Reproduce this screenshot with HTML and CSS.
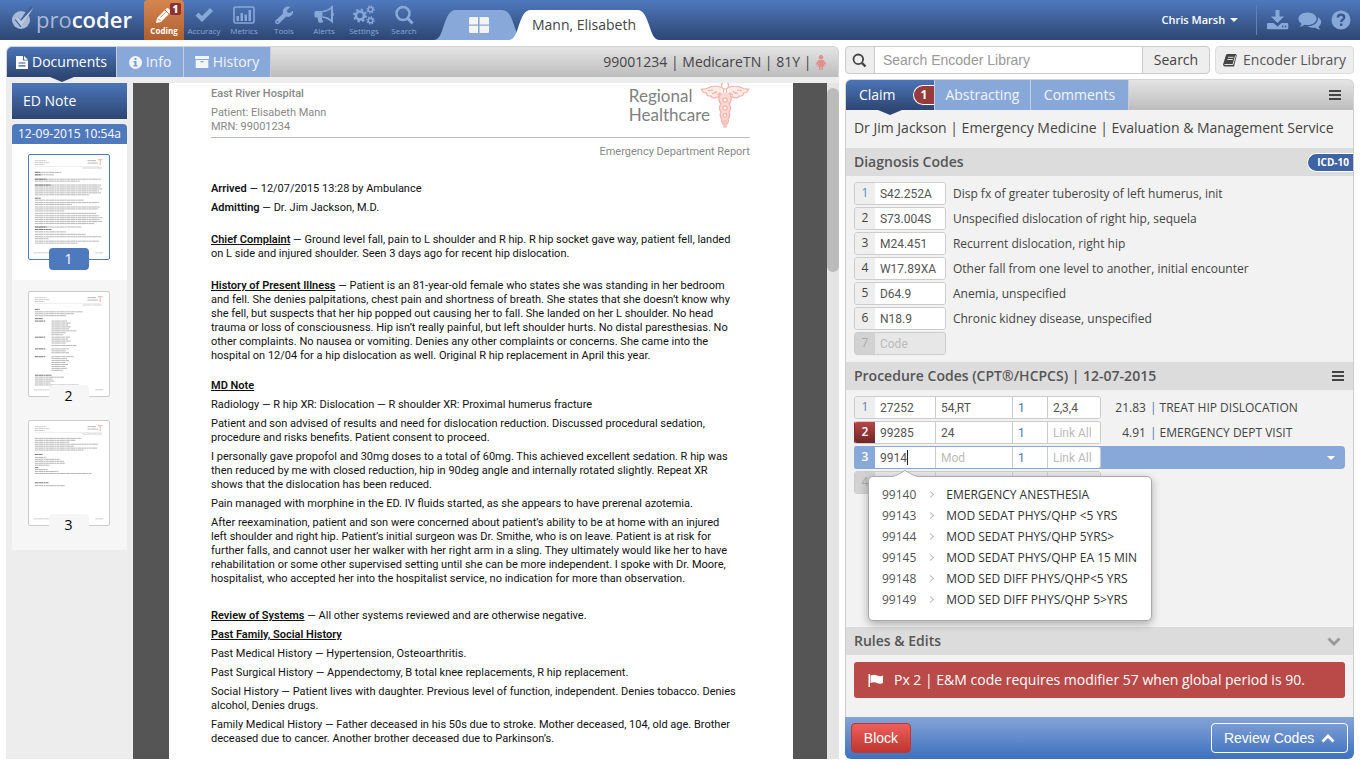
FILE: index.html
```
<!doctype html>
<html lang="en">
<head>
<meta charset="UTF-8">
<title>procoder</title>
<link rel="stylesheet" href="styles.css">
</head>
<body>
	<header class="topbar">
		<a class="logo" href="#">
			<svg width="23" height="24" viewBox="0 0 23 24">
				<circle cx="9" cy="14" r="9" fill="#a9b9d8"/>
				<path d="M4.500 12.500l4 5L20 1" fill="none" stroke="#42629d" stroke-width="4.500"/>
				<path d="M3.500 13l2.500-2 3 4L22 1 9.500 20.500z" fill="#bcc9e0"/>
			</svg>
			<span class="logo-text"><span>pro</span>coder</span>
		</a>
		<nav class="nav">
			<a class="nav-item active" href="#">
				<svg width="20" height="20" viewBox="0 0 20 20"><path d="M2 18l1-5L12.500 3.500q1-1 2 0l2 2q1 1 0 2L7 17z" fill="#fff"/><path d="M4 13.500l2.500 2.500M11 5l4 4" stroke="#c9733f" stroke-width="1"/><path d="M6.500 12.500l5-5" stroke="#c9733f" stroke-width=".8"/></svg>
				<span>Coding</span>
				<b class="nav-count">1</b>
			</a>
			<a class="nav-item" href="#">
				<svg width="20" height="20" viewBox="0 0 20 20"><path d="M1.500 10.500L4.500 7.500 8 11 16 3l3 3L8 17z"/></svg>
				<span>Accuracy</span>
			</a>
			<a class="nav-item" href="#">
				<svg width="22" height="20" viewBox="0 0 22 20"><rect x="1" y="2" width="20" height="16" rx="1.500" fill="none" stroke="#89a8da" stroke-width="1.600"/><path d="M3.500 11h2.500v5H3.500zM7.500 8H10v8H7.500zM11.500 9.500H14V16h-2.500zM15.500 5H18v11h-2.500z"/></svg>
				<span>Metrics</span>
			</a>
			<a class="nav-item" href="#">
				<svg width="20" height="20" viewBox="0 0 20 20"><path d="M1.500 15.500L9 8.500C8 5 10.500 1.500 14 1.500q1.500 0 2.500.6L13 5l.4 2.400 2.500.6L19 5.500c.6 4-2.800 7-6.700 6L4.800 18.800c-2 1.400-4.800-1.300-3.300-3.300z"/><circle cx="3.500" cy="16.800" r=".9" fill="#3c5b98"/></svg>
				<span>Tools</span>
			</a>
			<a class="nav-item" href="#">
				<svg width="20" height="20" viewBox="0 0 20 20"><path d="M2 6h6.500v6.500H7.800c0 2 .5 2.800 1.700 4-1.300 1.700-4.700 1.500-5.200.5-.5-1.600-.4-3-.5-4.500H2q-1.500 0-1.500-1.500V7.500Q.5 6 2 6z"/><path d="M8.500 6.500Q14 6 18 2v14.500q-4-4-9.500-4.300" fill="none" stroke="#89a8da" stroke-width="1.700"/><path d="M17 1h1.800v6.500q1.200.2 1.200 1.700t-1.200 1.700V17H17z"/></svg>
				<span>Alerts</span>
			</a>
			<a class="nav-item" href="#">
				<svg width="22" height="20" viewBox="0 0 22 20" fill="none"><g class="gears"><circle cx="7" cy="10.500" r="4" stroke-width="2.600"/><circle cx="7" cy="10.500" r="6" stroke-width="2" stroke-dasharray="2.360 2.360"/><circle cx="17.500" cy="4.500" r="2.300" stroke-width="1.500"/><circle cx="17.500" cy="4.500" r="3.500" stroke-width="1.400" stroke-dasharray="1.370 1.370"/><circle cx="17.500" cy="15.500" r="2.300" stroke-width="1.500"/><circle cx="17.500" cy="15.500" r="3.500" stroke-width="1.400" stroke-dasharray="1.370 1.370"/></g></svg>
				<span>Settings</span>
			</a>
			<a class="nav-item" href="#">
				<svg width="20" height="20" viewBox="0 0 20 20"><circle cx="9" cy="8.500" r="6.500" fill="none" stroke="#89a8da" stroke-width="2.600"/><path d="M13.500 13l5 5.500" stroke="#89a8da" stroke-width="3"/></svg>
				<span>Search</span>
			</a>
		</nav>
		<div class="patient-tabs">
			<button class="ptab home" aria-label="Home">
				<svg class="ptab-shape" width="92" height="30" viewBox="0 0 92 30"><path d="M0 30c7 0 8-7 11-15S16 0 23 0h46c7 0 9 7 12 15s4 15 11 15z" fill="#89a8da"/></svg>
				<svg class="ptab-icon" width="20" height="16" viewBox="0 0 20 16"><path d="M1.500 0H9v7.400H0V1.500Q0 0 1.500 0zM10.600 0h7.900Q20 0 20 1.500v5.900h-9.400zM0 8.800h9V16H1.500Q0 16 0 14.500zM10.600 8.800H20v5.700q0 1.500-1.500 1.500h-7.900z" fill="#f4f4f4"/></svg>
			</button>
			<button class="ptab current">
				<svg class="ptab-shape" width="152" height="30" viewBox="0 0 152 30"><path d="M0 30c7 0 8-7 11-15S16 0 23 0h106c7 0 9 7 12 15s4 15 11 15z" fill="#fff"/></svg>
				<span>Mann, Elisabeth</span>
			</button>
		</div>
		<div class="user-area">
			<button class="user">Chris Marsh <i class="caret-down"></i></button>
			<button class="tool" aria-label="Download"><svg width="22" height="20" viewBox="0 0 22 20"><path d="M8.500 0h4v6.500H17L10.500 13 4 6.500h4.500z"/><path d="M1 13h5.500l4 3.500 4-3.500H20q1.300 0 1.300 1.200V18q0 1.300-1.300 1.300H1Q0 19.300 0 18v-3.800Q0 13 1 13z"/><path d="M15 16.500h1.500M17.800 16.500h1.500" stroke="#36538c" stroke-width="1.300"/></svg></button>
			<button class="tool" aria-label="Chat"><svg width="24" height="20" viewBox="0 0 24 20"><path d="M9.500 2.500c5 0 9 2.800 9 6.300s-4 6.300-9 6.300q-1.600 0-3-.3Q4 16.800 1.500 17q2-1.500 2-3.400C1.500 12.500.5 10.800.5 8.800c0-3.500 4-6.300 9-6.300z"/><path d="M20 7.200c4 2.300 4.300 6.800.5 9.200q0 1.700 2 3-3.200 0-5.500-2-4.500.8-7.500-1.200C16 16.500 20.500 12.500 20 7.200z"/></svg></button>
			<button class="tool" aria-label="Help"><svg width="20" height="20" viewBox="0 0 20 20"><circle cx="10" cy="10" r="9.500"/><path d="M6.800 7.500C7 3.500 13.200 3.700 13.200 7.300c0 2.400-3 2.200-3 4.700" fill="none" stroke="#38568f" stroke-width="2.300"/><path d="M9 13.500h2.400v2.400H9z" fill="#38568f"/></svg></button>
		</div>
	</header>

	<main class="workspace">
		<section class="panel chart">
			<div class="tabbar">
				<button class="tab active"><svg width="12" height="13" viewBox="0 0 12 13"><path d="M0 0h7v4.500h5V13H0z" fill="#fff"/><path d="M8 0l4 3.700H8z" fill="#fff"/><path d="M2.500 7h7M2.500 9.800h7" stroke="#3a5994" stroke-width="1.200"/></svg>Documents</button>
				<button class="tab"><svg width="13" height="13" viewBox="0 0 13 13"><circle cx="6.500" cy="6.500" r="6.500" fill="#f2f5fa"/><path d="M5.500 2h2v2h-2zM4.500 5h3v4h1v1.500h-4V9h1V6.500h-1z" fill="#7f9fd2"/></svg>Info</button>
				<button class="tab"><svg width="14" height="12" viewBox="0 0 14 12"><path d="M0 0h14v3H0zM.700 4h12.600v8H.700z" fill="#f2f5fa"/><path d="M5.500 5.700h3" stroke="#7f9fd2" stroke-width="1.200"/></svg>History</button>
				<div class="patient-line">99001234 | MedicareTN | 81Y | <svg width="12" height="15" viewBox="0 0 12 15"><circle cx="6" cy="2.200" r="2.200" fill="#e08f8a"/><path d="M3.500 5h5L11.500 9l-1 1-2.200-2.500L10 11.500H8V15H6.500v-3h-1v3H4v-3.500H2l1.700-4L1.500 10l-1-1z" fill="#e08f8a"/></svg></div>
			</div>
			<div class="chart-body">
				<aside class="pages">
					<h2>ED Note</h2>
					<h3>12-09-2015 10:54a</h3>
					<a class="page-thumb selected" href="#">
						<svg width="82" height="106" viewBox="0 0 82 106">
							<g id="letterhead"><path d="M6 5.500h12M6 7.500h15M6 9.500h10" class="t lt"/><path d="M60 5.500h9M60 8h11" class="t"/><path d="M70.500 4.500h5M73 4v6" stroke="#f4b3ab" stroke-width="1"/><path d="M6 11.500h69" stroke="#ddd" stroke-width=".5"/><path d="M55 13h20" class="t lt"/><path d="M5 100h16M68 100h8" class="t lt"/></g>
							<path d="M6 17.500h27M6 20h20M6 24.500h68M6 26.500h46M6 30.500h68M6 32.500h67M6 34.500h69M6 36.500h66M6 38.500h68M6 40.500h56M6 46h50M6 48.500h66M6 50.500h38M6 53h67M6 55h65M6 57h30M6 59.500h63M6 62h66M6 64h70M6 66h67M6 68h69M6 70h61M6 73.500h48M6 78.500h32M6 81h52M6 83.500h68M6 85.500h14M6 88h66M6 90h44" class="t"/>
							<path d="M6 17.500h5M6 20h6M6 24.500h12M6 30.500h16M6 44h6M6 73.500h12M6 76h17" class="t dk"/>
						</svg>
						<b>1</b>
					</a>
					<a class="page-thumb" href="#">
						<svg width="82" height="106" viewBox="0 0 82 106">
							<use href="#letterhead"/>
							<path d="M6 20h49M6 22h40M6 24h32M23 29.500h16M23 31.500h20M23 33.500h17M23 35.500h20M23 37.500h18M23 39.500h26M23 41.500h15M23 43.500h12M23 46h19M23 48h17M23 50h20M23 52h15M23 54.500h26M23 58h18M23 60h15M23 62h18M23 66h23M23 68h16M23 70h18M23 72h15M23 74h17M23 76h14M23 78h16M23 80h12M6 87h30M6 89h18M6 91h20M6 93h16M6 95h45" class="t"/>
							<path d="M6 17.500h5M6 27h8M6 29.500h11M6 46h11M6 58h11M6 66h11M6 85h17" class="t dk"/>
						</svg>
						<b>2</b>
					</a>
					<a class="page-thumb" href="#">
						<svg width="82" height="106" viewBox="0 0 82 106">
							<use href="#letterhead"/>
							<path d="M6 17.500h48M6 19.500h42M6 21.500h35M6 23.500h65M6 25.500h40M6 27.500h64M6 29.500h50M6 37h12M6 39h26M6 41h30M6 43h31M6 45h15M6 49.500h13M6 51.500h24M6 53.500h58M6 66h31" class="t"/>
							<path d="M6 34h8M6 47.500h4M6 63h14" class="t dk"/>
						</svg>
						<b>3</b>
					</a>
				</aside>
				<div class="viewer">
					<article class="sheet">
						<div class="letterhead">
							<div class="hospital">
								<h4>East River Hospital</h4>
								<p>Patient: Elisabeth Mann<br>MRN: 99001234</p>
							</div>
							<div class="brand">
								<span>Regional<br>Healthcare</span>
								<svg width="50" height="48" viewBox="0 0 50 48" fill="none" stroke="#f5b1a9" stroke-width="1.200">
									<path d="M21.500 4.500Q14 2 9 4.500 5 6.500 1.500 6c.5 3 3 4 5 4-.5 2 2 3.500 4.500 3 .5 2 4 2.500 5.500 1.300L21 13M28.500 4.500Q36 2 41 4.500q4 2 7.500 1.500c-.5 3-3 4-5 4 .5 2-2 3.500-4.500 3-.5 2-4 2.500-5.500 1.300L29 13" fill="#fdebe8"/>
									<path d="M8 7.500q3 .3 5-.7M12 10.500q3 0 5-2M17 12q2-.5 3-2.500M42 7.500q-3 .3-5-.7M38 10.500q-3 0-5-2M33 12q-2-.5-3-2.500"/>
									<circle cx="25" cy="2.500" r="3.500"/><path d="M23.500 6v16M26.500 6v16"/>
									<path d="M21 10c-3 3-3 8 0 11-2 2-2 6 0 8-1 2-1 5 1 7-1 2 0 5 2 6v2h2v-2c2-1 3-4 2-6 2-2 2-5 1-7 2-2 2-6 0-8 3-3 3-8 0-11" fill="#fbd9d4"/>
									<circle cx="25" cy="17" r="2.200" fill="#fff"/><circle cx="25" cy="25" r="2.200" fill="#fff"/><circle cx="25" cy="32.500" r="1.800" fill="#fff"/><circle cx="25" cy="39" r="1.300" fill="#fff"/>
								</svg>
							</div>
						</div>
						<p class="report">Emergency Department Report</p>
						<p><strong>Arrived</strong> — 12/07/2015 13:28 by Ambulance</p>
						<p><strong>Admitting</strong> — Dr. Jim Jackson, M.D.</p>
						<p class="part"><u>Chief Complaint</u> — Ground level fall, pain to L shoulder and R hip. R hip socket gave way, patient fell, landed<br>on L side and injured shoulder. Seen 3 days ago for recent hip dislocation.</p>
						<p class="part"><u>History of Present Illness</u> — Patient is an 81-year-old female who states she was standing in her bedroom<br>and fell. She denies palpitations, chest pain and shortness of breath. She states that she doesn’t know why<br>she fell, but suspects that her hip popped out causing her to fall. She landed on her L shoulder. No head<br>trauma or loss of consciousness. Hip isn’t really painful, but left shoulder hurts. No distal paresthesias. No<br>other complaints. No nausea or vomiting. Denies any other complaints or concerns. She came into the<br>hospital on 12/04 for a hip dislocation as well. Original R hip replacement in April this year.</p>
						<p class="note"><u>MD Note</u></p>
						<p>Radiology — R hip XR: Dislocation — R shoulder XR: Proximal humerus fracture</p>
						<p>Patient and son advised of results and need for dislocation reduction. Discussed procedural sedation,<br>procedure and risks benefits. Patient consent to proceed.</p>
						<p>I personally gave propofol and 30mg doses to a total of 60mg. This achieved excellent sedation. R hip was<br>then reduced by me with closed reduction, hip in 90deg angle and internally rotated slightly. Repeat XR<br>shows that the dislocation has been reduced.</p>
						<p>Pain managed with morphine in the ED. IV fluids started, as she appears to have prerenal azotemia.</p>
						<p>After reexamination, patient and son were concerned about patient’s ability to be at home with an injured<br>left shoulder and right hip. Patient’s initial surgeon was Dr. Smithe, who is on leave. Patient is at risk for<br>further falls, and cannot user her walker with her right arm in a sling. They ultimately would like her to have<br>rehabilitation or some other supervised setting until she can be more independent. I spoke with Dr. Moore,<br>hospitalist, who accepted her into the hospitalist service, no indication for more than observation.</p>
						<p class="review"><u>Review of Systems</u> — All other systems reviewed and are otherwise negative.</p>
						<p><u>Past Family, Social History</u></p>
						<p>Past Medical History — Hypertension, Osteoarthritis.</p>
						<p>Past Surgical History — Appendectomy, B total knee replacements, R hip replacement.</p>
						<p>Social History — Patient lives with daughter. Previous level of function, independent. Denies tobacco. Denies<br>alcohol, Denies drugs.</p>
						<p>Family Medical History — Father deceased in his 50s due to stroke. Mother deceased, 104, old age. Brother<br>deceased due to cancer. Another brother deceased due to Parkinson’s.</p>
					</article>
				</div>
				<div class="scrollbar"><i></i></div>
			</div>
		</section>

		<section class="side">
			<div class="search-row">
				<form class="search">
					<label for="q" aria-label="Search"><svg width="15" height="15" viewBox="0 0 15 15"><circle cx="6.300" cy="6.300" r="4.800" fill="none" stroke="#444" stroke-width="1.800"/><path d="M9.800 9.800l3.700 3.700" stroke="#444" stroke-width="2.400"/></svg></label>
					<input id="q" type="text" placeholder="Search Encoder Library">
					<button type="button">Search</button>
				</form>
				<button class="library"><svg width="14" height="13" viewBox="0 0 14 13"><path d="M4.500 0H13l.7 1.500L11 12.500H1.500Q-.300 12 .2 10L3 1Q3.500 0 4.500 0z" fill="#444"/><path d="M5 3.300h5.500M4.300 5.500h5.500M1.500 10.500h8.500l2.500-9" stroke="#eee" stroke-width=".9" fill="none"/></svg>Encoder Library</button>
			</div>

			<div class="panel claim">
				<div class="tabbar">
					<button class="tab active">Claim <b class="tab-count">1</b></button>
					<button class="tab">Abstracting</button>
					<button class="tab">Comments</button>
					<button class="menu" aria-label="Menu"></button>
				</div>
				<div class="claim-body">
					<p class="provider">Dr Jim Jackson | Emergency Medicine | Evaluation &amp; Management Service</p>

					<h2 class="section-head">Diagnosis Codes <span class="icd">ICD-10</span></h2>
					<div class="codes">
						<div class="code-row"><div class="fields"><label for="dx1" class="lit">1</label><input id="dx1" class="dx" value="S42.252A"></div><span>Disp fx of greater tuberosity of left humerus, init</span></div>
						<div class="code-row"><div class="fields"><label for="dx2">2</label><input id="dx2" class="dx" value="S73.004S"></div><span>Unspecified dislocation of right hip, sequela</span></div>
						<div class="code-row"><div class="fields"><label for="dx3">3</label><input id="dx3" class="dx" value="M24.451"></div><span>Recurrent dislocation, right hip</span></div>
						<div class="code-row"><div class="fields"><label for="dx4">4</label><input id="dx4" class="dx" value="W17.89XA"></div><span>Other fall from one level to another, initial encounter</span></div>
						<div class="code-row"><div class="fields"><label for="dx5">5</label><input id="dx5" class="dx" value="D64.9"></div><span>Anemia, unspecified</span></div>
						<div class="code-row"><div class="fields"><label for="dx6">6</label><input id="dx6" class="dx" value="N18.9"></div><span>Chronic kidney disease, unspecified</span></div>
						<div class="code-row empty"><div class="fields"><label for="dx7">7</label><input id="dx7" class="dx" placeholder="Code"></div></div>
					</div>

					<h2 class="section-head">Procedure Codes (CPT®/HCPCS) | 12-07-2015 <button class="menu" aria-label="Menu"></button></h2>
					<div class="codes procedures">
						<div class="code-row">
							<div class="fields"><label for="px1" class="lit">1</label><input id="px1" class="px" value="27252"><input class="mod" aria-label="Modifier" value="54,RT"><input class="unit" aria-label="Units" value="1"><input class="link" aria-label="Link" value="2,3,4"></div>
							<span class="rvu">21.83</span><i>|</i><span>TREAT HIP DISLOCATION</span>
						</div>
						<div class="code-row error">
							<div class="fields"><label for="px2">2</label><input id="px2" class="px" value="99285"><input class="mod" aria-label="Modifier" value="24"><input class="unit" aria-label="Units" value="1"><input class="link" aria-label="Link" placeholder="Link All"></div>
							<span class="rvu">4.91</span><i>|</i><span>EMERGENCY DEPT VISIT</span>
						</div>
						<div class="code-row editing">
							<div class="fields"><label for="px3">3</label><input id="px3" class="px" value="9914"><input class="mod" aria-label="Modifier" placeholder="Mod"><input class="unit" aria-label="Units" value="1"><input class="link" aria-label="Link" placeholder="Link All"></div>
							<button class="expand" aria-label="Expand"><i class="caret-down"></i></button>
							<span class="text-caret"></span>
							<div class="suggest">
								<svg class="suggest-tip" width="24" height="7" viewBox="0 0 24 7"><path d="M0 6.500L4 5l8-4.500L20 5l4 1.500V7H0z" fill="#fff"/><path d="M0 6Q3 6 5 4.500L12 .5l7 4Q21 6 24 6" fill="none" stroke="#aaa"/></svg>
								<a href="#"><span>99140</span><i></i>EMERGENCY ANESTHESIA</a>
								<a href="#"><span>99143</span><i></i>MOD SEDAT PHYS/QHP &lt;5 YRS</a>
								<a href="#"><span>99144</span><i></i>MOD SEDAT PHYS/QHP 5YRS&gt;</a>
								<a href="#"><span>99145</span><i></i>MOD SEDAT PHYS/QHP EA 15 MIN</a>
								<a href="#"><span>99148</span><i></i>MOD SED DIFF PHYS/QHP&lt;5 YRS</a>
								<a href="#"><span>99149</span><i></i>MOD SED DIFF PHYS/QHP 5&gt;YRS</a>
							</div>
						</div>
						<div class="code-row empty">
							<div class="fields"><label for="px4">4</label><input id="px4" class="px"><input class="mod" aria-label="Modifier"><input class="unit" aria-label="Units"><input class="link" aria-label="Link"></div>
						</div>
					</div>

					<h2 class="section-head">Rules &amp; Edits <svg width="14" height="9" viewBox="0 0 14 9"><path d="M1.500 1.500L7 7l5.500-5.500" fill="none" stroke="#999" stroke-width="2.800"/></svg></h2>
					<div class="rules">
						<div class="alert"><svg width="16" height="13" viewBox="0 0 16 13"><path d="M.500 0H2v13H.500zM2.500 1.500Q6 0 9 1.500t6 0V9q-3 1.500-6 0T2.500 9z" fill="#fff"/></svg>Px 2 | E&amp;M code requires modifier 57 when global period is 90.</div>
					</div>
				</div>
				<footer class="actions">
					<button class="block">Block</button>
					<button class="review-codes">Review Codes <svg width="14" height="9" viewBox="0 0 14 9"><path d="M1.500 7.500L7 2l5.500 5.500" fill="none" stroke="#fff" stroke-width="2.800"/></svg></button>
				</footer>
			</div>
		</section>
	</main>
</body>
</html>
```
FILE: styles.css
```
* { box-sizing: border-box }
body {
	display: flex;
	flex-direction: column;
	height: 100vh;
	margin: 0;
	overflow: hidden;
	background: #fff;
	color: #444;
	font: 14px/20px "Open Sans", sans-serif;
}
h2, h3, h4, p { margin: 0; font-weight: 400 }
a { color: inherit; text-decoration: none }
button {
	padding: 0;
	border: 0;
	background: none;
	color: inherit;
	font: inherit;
}
input {
	min-width: 0;
	border: 0;
	border-radius: 0;
	outline: 0;
}
svg { flex: none }

/* top bar */
.topbar {
	display: flex;
	flex: none;
	height: 40px;
	background: linear-gradient(#4f79bd, #2d4672);
}
.logo {
	display: flex;
	width: 144px;
	padding: 6px 0 0 12px;
}
.logo-text {
	margin-left: 1px;
	color: #fff;
	font-size: 22px;
	font-weight: 600;
	line-height: 26px;
}
.logo-text span { color: #a9b9d8; font-weight: 500 }
.nav { display: flex }
.nav-item {
	position: relative;
	display: flex;
	flex-direction: column;
	align-items: center;
	width: 40px;
	padding-top: 5px;
	color: #89a8da;
	font-size: 8px;
	line-height: 12px;
}
.nav-item svg { fill: #89a8da }
.nav-item .gears { fill: none; stroke: #89a8da }
.nav-item.active {
	border-radius: 4px 4px 0 0;
	background: linear-gradient(#d58550, #b0602e);
	color: #fff;
	font-weight: 700;
}
.nav-count {
	position: absolute;
	top: 3px;
	right: 3px;
	width: 11px;
	border-radius: 2px;
	background: #913033;
	font-size: 10px;
	text-align: center;
}
.patient-tabs { display: flex; padding: 10px 0 0 9px }
.ptab {
	position: relative;
	display: flex;
	align-items: center;
	justify-content: center;
	width: 92px;
	height: 30px;
}
.ptab-shape { position: absolute; top: 0; left: 0 }
.ptab-icon { position: relative }
.ptab.current { width: 152px; margin-left: -17px }
.ptab.current span { position: relative }
.user-area {
	display: flex;
	align-items: center;
	margin-left: auto;
	padding-right: 9px;
}
.user {
	height: 30px;
	margin-right: 8px;
	padding-right: 18px;
	border-right: 1px solid #5f82bd;
	color: #fff;
	font-size: 11px;
	font-weight: 600;
}
.caret-down {
	display: inline-block;
	margin-left: 2px;
	border: 4px solid transparent;
	border-top-color: #fff;
	border-bottom: 0;
	vertical-align: 2px;
}
.tool { height: 20px; margin-left: 9px }
.tool:nth-child(2) { margin-left: 2px }
.tool svg { display: block; fill: #89a8da }

/* panels */
.workspace {
	display: grid;
	flex: 1;
	grid-template-columns: 18fr 11fr;
	gap: 6px;
	min-height: 0;
	padding: 6px;
}
.panel {
	display: flex;
	flex-direction: column;
	min-height: 0;
}
.tabbar {
	display: flex;
	flex: none;
	height: 31px;
	border: 1px solid #d4d4d4;
	border-bottom: 0;
	border-radius: 6px 6px 0 0;
	background: linear-gradient(#e4e4e4, #bdbdbd);
}
.tab {
	position: relative;
	display: flex;
	align-items: center;
	justify-content: center;
	gap: 4px;
	border-right: 1px solid #c9ccd2;
	background: #89a8da;
	color: #f2f5fa;
	font-weight: 500;
}
.tab.active {
	border-radius: 5px 0 0 0;
	background: linear-gradient(#4b75b9, #2d4672);
	color: #fff;
}
.tab.active::after {
	content: "";
	position: absolute;
	top: 100%;
	left: 50%;
	margin-left: -12px;
	border: 12px solid transparent;
	border-top: 5px solid #2d4672;
	border-bottom: 0;
}
.chart .tab { width: 67px }
.chart .tab.active { width: 110px }
.chart .tab:nth-child(3) { width: 87px }
.patient-line { margin-left: auto; padding: 5px 11px 0 0 }
.patient-line svg { vertical-align: -3px }

/* document viewer */
.chart-body {
	display: flex;
	flex: 1;
	min-height: 0;
	padding: 6px 0 0 6px;
	background: #ededed;
}
.pages { width: 115px; margin-right: 6px }
.pages h2 {
	margin-bottom: 5px;
	padding: 8px 11px;
	background: linear-gradient(#4b75b9, #2d4672);
	color: #fff;
	font-size: 14px;
	font-weight: 500;
}
.pages h3 {
	border-radius: 4px 4px 0 0;
	background: #4f79bd;
	color: #fff;
	font-size: 12px;
	text-align: center;
}
.page-thumb {
	display: flex;
	flex-direction: column;
	align-items: center;
	padding: 11px 2px 0 0;
	background: #f6f6f6;
	color: #000;
}
.page-thumb:last-child { padding: 13px 2px 14px 0 }
.page-thumb.selected { padding: 10px 2px 10px 0; background: #fff }
.page-thumb svg {
	border: 1px solid #ccc;
	border-radius: 2px;
	background: #fff;
}
.page-thumb b {
	width: 40px;
	margin-top: -12px;
	border-radius: 4px;
	background: #f6f6f6;
	font-weight: 400;
	line-height: 22px;
	text-align: center;
}
.page-thumb.selected svg { border-color: #4f79bd }
.page-thumb.selected b { background: #4f79bd; color: #fff }
.t { fill: none; stroke: #b4b4b4; stroke-width: 1; stroke-dasharray: 3.3 .3 5.1 .3 1.7 .3 }
.lt { stroke: #ccc }
.dk { stroke: #777 }
.viewer {
	flex: 1;
	min-width: 0;
	padding: 0 34px 0 36px;
	overflow: hidden;
	background: #555;
}
.sheet {
	min-height: 100%;
	padding: 0 43px 0 42px;
	background: #fff;
	color: #111;
	font: 11px/14px Roboto, sans-serif;
	white-space: nowrap;
}
.sheet p { margin-bottom: 5px }
.sheet u, .sheet strong { font-weight: 600 }
.letterhead {
	display: flex;
	justify-content: space-between;
	height: 55px;
	border-bottom: 1px solid #bbb;
	color: #888;
}
.hospital { padding-top: 4px }
.hospital h4 { margin-bottom: 5px; font-weight: 500; font-size: 11px }
.brand { display: flex }
.brand span {
	margin-right: -10px;
	padding-top: 3px;
	color: #808080;
	font: 17px/19px Lato, sans-serif;
}
.sheet .report {
	margin: 7px 0 23px;
	color: #888;
	text-align: right;
}
.sheet .part { margin-top: 18px }
.sheet .note { margin-top: 16px }
.sheet .review { margin-top: 23px }
.scrollbar { width: 12px; padding-top: 5px; background: #e4e4e4 }
.scrollbar i {
	display: block;
	height: 184px;
	border-radius: 6px;
	background: #bbb;
}

/* encoder search */
.side {
	display: flex;
	flex-direction: column;
	min-width: 0;
	min-height: 0;
}
.search-row { display: flex; gap: 5px; margin-bottom: 5px }
.search {
	display: flex;
	flex: 1;
	height: 28px;
	overflow: hidden;
	border: 1px solid #ccc;
	border-radius: 4px;
	background: #eee;
}
.search label {
	display: flex;
	align-items: center;
	justify-content: center;
	width: 28px;
}
.search input {
	flex: 1;
	padding: 0 8px;
	border: solid #ccc;
	border-width: 0 1px;
	font: 14px "Liberation Sans", sans-serif;
}
.search input::placeholder { color: #999 }
.search button { width: 66px; font-weight: 500 }
.library {
	display: flex;
	align-items: center;
	justify-content: center;
	gap: 6px;
	width: 139px;
	border: 1px solid #ddd;
	border-radius: 4px;
	background: #eee;
	color: #555;
}

/* claim */
.claim { flex: 1 }
.claim .tab { width: 96px }
.claim .tab.active {
	justify-content: flex-start;
	width: 89px;
	padding-left: 13px;
}
.claim .tab:nth-child(3) { width: 98px }
.tab-count {
	position: absolute;
	top: 5px;
	right: 0;
	width: 21px;
	border: 1px solid #fff;
	border-right: 0;
	border-radius: 10px 0 0 10px;
	background: #963a3c;
	font-size: 12px;
	line-height: 18px;
	text-align: center;
}
.menu {
	width: 12px;
	height: 10px;
	margin: 10px 12px 0 auto;
	border: solid #444;
	border-width: 2px 0;
	background: linear-gradient(#444, #444) center / 12px 2px no-repeat;
}
.claim-body {
	flex: 1;
	border: solid #ccc;
	border-width: 0 1px;
	background: #f2f2f2;
}
.provider { padding: 8px 8px 10px; white-space: nowrap }
.section-head {
	display: flex;
	align-items: center;
	justify-content: space-between;
	height: 28px;
	padding: 0 9px 0 8px;
	background: #dcdcdc;
	color: #555;
	font-size: 14px;
	font-weight: 600;
}
.section-head .menu { margin: 0 }
.icd {
	margin-right: -9px;
	padding: 0 4px 0 9px;
	border: 1px solid #fff;
	border-right: 0;
	border-radius: 10px 0 0 10px;
	background: #3f64a3;
	color: #fff;
	font-size: 10px;
	font-weight: 700;
	line-height: 17px;
}
.codes {
	display: flex;
	flex-direction: column;
	gap: 2px;
	padding: 6px 8px 7px;
	font-size: 12px;
}
.procedures { height: 237px }
.code-row {
	position: relative;
	display: flex;
	align-items: center;
	height: 23px;
}
.code-row > span { margin-left: 7px }
.fields {
	display: flex;
	height: 23px;
	overflow: hidden;
	border: 1px solid #ccc;
	border-radius: 3px;
}
.fields label {
	width: 20px;
	background: #eee;
	text-align: center;
}
.fields .lit { color: #5d86b4 }
.fields input {
	padding: 0 0 0 5px;
	border-left: 1px solid #ccc;
	background: #fff;
	color: #555;
	font: 12px Roboto, sans-serif;
}
.fields label + input { border-left: 0 }
.fields input::placeholder { color: #bbb }
.dx { width: 70px }
.px { width: 60px }
.mod { width: 77px }
.unit { width: 35px }
.fields .unit { color: #4a78ac }
.link { width: 53px }
.code-row > .rvu { width: 45px; margin-left: 0; text-align: right }
.code-row > i { margin-left: 4px; color: #4a78ac; font-style: normal }
.code-row > i + span { margin-left: 3px }
.empty label { background: #d2d2d2; color: #aaa }
.fields:has(input:placeholder-shown) label { cursor: text }
.empty .fields input { background: #e7e7e7 }
.error .fields { border-left-color: #8a2b1e }
.error label {
	background: linear-gradient(#b84747, #6c2526);
	color: #fff;
	font-weight: 600;
}
.editing {
	z-index: 1;
	border-radius: 4px;
	background: #89a8da;
}
.editing .fields { border-color: #89a8da #ccc #89a8da #89a8da }
.editing label { background: #89a8da; color: #fff; font-weight: 600 }
.expand { margin-left: auto; padding-right: 10px }
.text-caret {
	position: absolute;
	top: 4px;
	left: 46px;
	width: 1px;
	height: 15px;
	background: #222;
}
.suggest {
	position: absolute;
	top: 30px;
	left: 14px;
	width: 284px;
	padding: 7px 12px 10px 13px;
	border: 1px solid #aaa;
	border-radius: 5px;
	background: #fff;
	box-shadow: 0 3px 8px rgba(0, 0, 0, 0.3);
}
.suggest-tip { position: absolute; top: -7px; left: 24px }
.suggest a {
	display: flex;
	align-items: center;
	color: #333;
	line-height: 21px;
	white-space: nowrap;
}
.suggest span { color: #555 }
.suggest i {
	width: 5px;
	height: 5px;
	margin: 0 13px 0 12px;
	border: solid #bbb;
	border-width: 1px 1px 0 0;
	transform: rotate(45deg);
}
.section-head svg { margin-right: 3px }
.rules { padding: 7px 8px }
.alert {
	display: flex;
	align-items: center;
	gap: 10px;
	height: 36px;
	padding-left: 14px;
	border-radius: 3px;
	background: #b94a48;
	color: #fff;
	font-weight: 500;
	white-space: nowrap;
}
.actions {
	display: flex;
	flex: none;
	justify-content: space-between;
	padding: 6px;
	border-radius: 0 0 6px 6px;
	background: linear-gradient(#85a4d6, #3d71bf);
	color: #fff;
	font: 14px "Liberation Sans", sans-serif;
}
.actions button { height: 30px; border-radius: 4px }
.block {
	width: 60px;
	border: 1px solid #b83a36;
	background: linear-gradient(#ee5f5b, #bd362f);
}
.review-codes { width: 137px; border: 1px solid #fff }
.review-codes svg { margin-left: 3px }
```
